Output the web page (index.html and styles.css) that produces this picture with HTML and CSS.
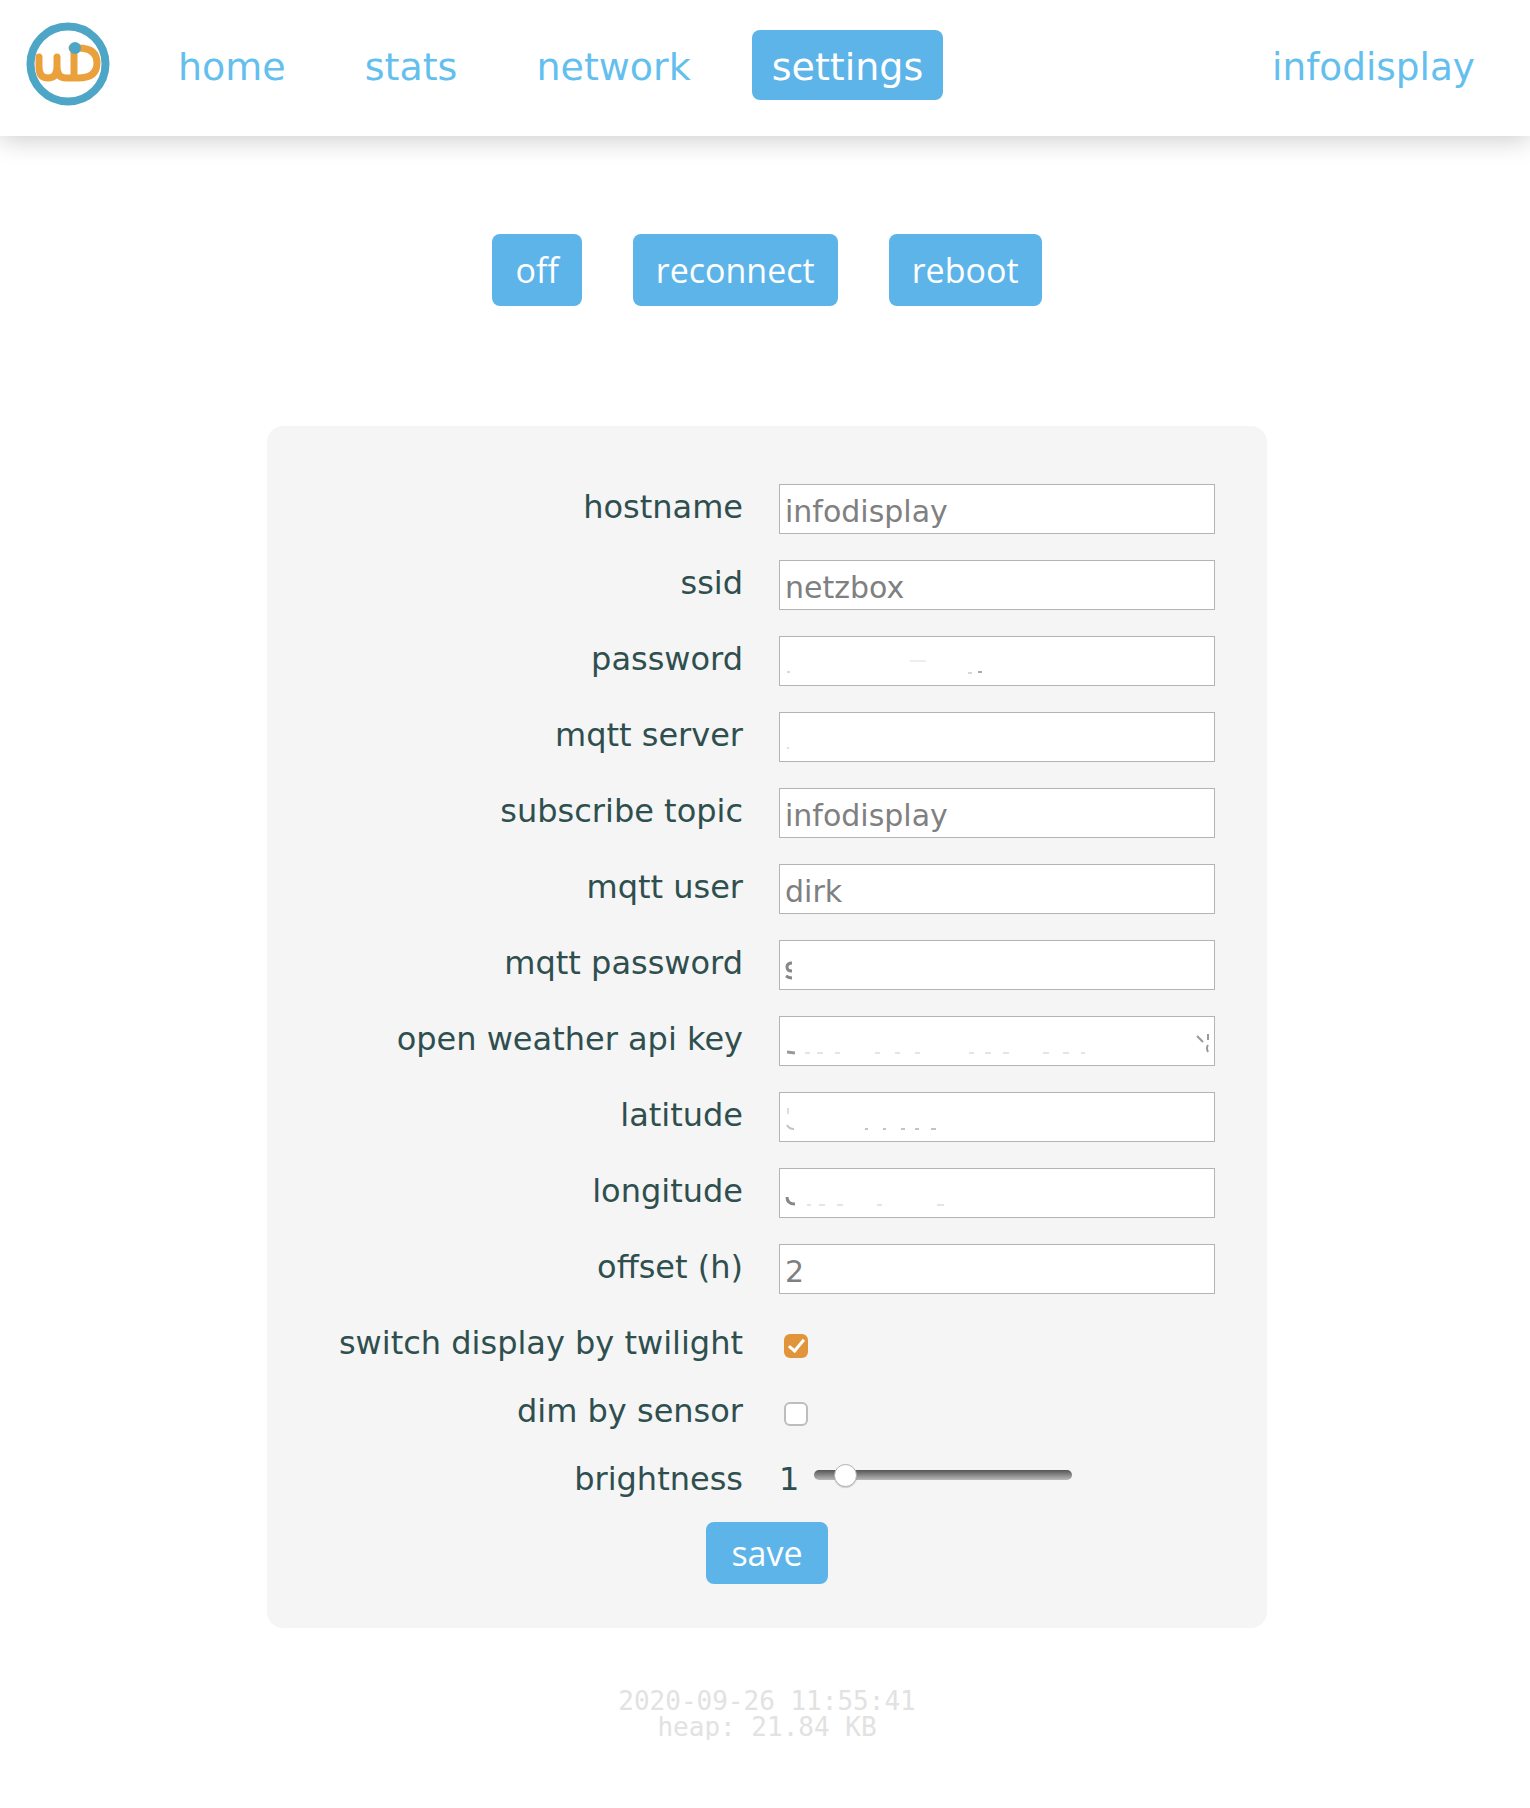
FILE: index.html
```html
<!DOCTYPE html>
<html lang="en">
<head>
    <meta charset="UTF-8">
    <title>infodisplay</title>
    <link rel="stylesheet" href="styles.css">
</head>
<body>
    <nav class="topbar">
        <svg class="logo" viewBox="26 22 84 84" aria-label="Logo">
            <circle cx="68" cy="64" r="37.5" fill="none" stroke="#4da6c6" stroke-width="8"/>
            <path d="M39 57 V67 Q39 78 48 78 Q57 78 57 67 V57 M57 67 Q57 78 66 78 H78 Q97 78 97 63 Q97 48 78 48 H72 M74 52 V78" fill="none" stroke="#eba13b" stroke-width="7" stroke-linecap="round"/>
            <circle cx="75" cy="48" r="6" fill="#4da6c6"/>
        </svg>
        <a class="nav-link" href="#">home</a>
        <a class="nav-link" href="#">stats</a>
        <a class="nav-link" href="#">network</a>
        <a class="nav-link active" href="#">settings</a>
        <a class="nav-link device" href="#">infodisplay</a>
    </nav>

    <main class="page">
        <div class="actions">
            <button class="button">off</button>
            <button class="button">reconnect</button>
            <button class="button">reboot</button>
        </div>

        <form class="panel">
            <label class="name">hostname</label>
            <input class="text-input" type="text" value="infodisplay">

            <label class="name">ssid</label>
            <input class="text-input" type="text" value="netzbox">

            <label class="name">password</label>
            <div class="field">
                <input class="text-input" type="text">
                <svg class="scraps" viewBox="0 0 436 50">
                    <path d="M131 25h16" stroke="#eeeeee" stroke-width="2"/>
                    <path d="M8 36h3M189 37h4" stroke="#d8d8d8" stroke-width="2"/>
                    <path d="M199 36h4" stroke="#aaaaaa" stroke-width="2"/>
                </svg>
            </div>

            <label class="name">mqtt server</label>
            <div class="field">
                <input class="text-input" type="text">
                <svg class="scraps" viewBox="0 0 436 50">
                    <path d="M9 35v2" stroke="#e0e0e0" stroke-width="2"/>
                </svg>
            </div>

            <label class="name">subscribe topic</label>
            <input class="text-input" type="text" value="infodisplay">

            <label class="name">mqtt user</label>
            <input class="text-input" type="text" value="dirk">

            <label class="name">mqtt password</label>
            <div class="field">
                <input class="text-input" type="text">
                <svg class="scraps" viewBox="0 0 436 50">
                    <path d="M13 23q-5 0-5 4t5 4M7 36q3 2 6 2" fill="none" stroke="#888888" stroke-width="3"/>
                </svg>
            </div>

            <label class="name">open weather api key</label>
            <div class="field">
                <input class="text-input" type="text">
                <svg class="scraps" viewBox="0 0 436 50">
                    <path d="M8 36l8 1" stroke="#999999" stroke-width="3"/>
                    <path d="M26 37h5M38 37h6M56 37h5M96 37h5M116 37h5M136 37h5M190 37h5M206 37h6M224 37h6M264 37h6M284 37h6M302 37h4" stroke="#e4e4e4" stroke-width="2"/>
                    <path d="M418 20l6 6M429 18v6M429 29q-2 3 0 7" fill="none" stroke="#999999" stroke-width="2"/>
                </svg>
            </div>

            <label class="name">latitude</label>
            <div class="field">
                <input class="text-input" type="text">
                <svg class="scraps" viewBox="0 0 436 50">
                    <path d="M9 16v6" stroke="#dddddd" stroke-width="2"/>
                    <path d="M8 33q2 4 7 4M86 37h3M104 37h3M122 37h4M136 37h4M152 37h5" fill="none" stroke="#c4c4c4" stroke-width="2"/>
                </svg>
            </div>

            <label class="name">longitude</label>
            <div class="field">
                <input class="text-input" type="text">
                <svg class="scraps" viewBox="0 0 436 50">
                    <path d="M8 29q0 7 8 7" fill="none" stroke="#888888" stroke-width="3"/>
                    <path d="M28 37h4M40 37h6M58 37h6M98 37h5M158 37h7" stroke="#e4e4e4" stroke-width="2"/>
                </svg>
            </div>

            <label class="name">offset (h)</label>
            <input class="text-input" type="text" value="2">

            <label class="name check-name">switch display by twilight</label>
            <input class="check" type="checkbox" checked>

            <label class="name check-name">dim by sensor</label>
            <input class="check" type="checkbox">

            <label class="name">brightness</label>
            <div class="level">
                <span class="level-value">1</span>
                <input class="range" type="range" min="0" max="12" value="1">
            </div>

            <div class="save-row">
                <button class="button" type="button">save</button>
            </div>
        </form>

        <div class="footer">
            2020-09-26 11:55:41<br>
            heap: 21.84 KB
        </div>
    </main>
</body>
</html>
```

FILE: styles.css
```css
body {
    margin: 0;
    background: #ffffff;
    color: #2f4f4f;
    font-family: "DejaVu Sans", Verdana, sans-serif;
}

.topbar {
    height: 136px;
    display: flex;
    align-items: center;
    background: #ffffff;
    box-shadow: 0 4px 24px rgba(0, 0, 0, 0.2);
}

.logo {
    width: 84px;
    height: 84px;
    margin: 0 48px 8px 26px;
    flex: none;
}

.nav-link {
    padding: 16px 20px 12px;
    margin: 0 39px 6px 0;
    border-radius: 8px;
    color: #64bfee;
    font-size: 38px;
    line-height: 42px;
    text-decoration: none;
}

.nav-link.active {
    margin: 0 0 6px 2px;
    background: #5db4e9;
    color: #ffffff;
}

.nav-link.device {
    margin: 0 35px 6px auto;
    font-size: 37.4px;
}

.page {
    padding-left: 4px;
}

.actions {
    display: flex;
    justify-content: center;
    gap: 51px;
    margin-top: 98px;
}

.button {
    height: 72px;
    padding: 0 23px;
    border: 0;
    border-radius: 8px;
    background: #5db4e9;
    color: #ffffff;
    font-family: "Open Sans", sans-serif;
    font-size: 34px;
}

.panel {
    width: 1000px;
    box-sizing: border-box;
    margin: 120px auto 0;
    padding: 58px 52px 44px 0;
    display: grid;
    grid-template-columns: 476px 436px;
    column-gap: 36px;
    row-gap: 26px;
    align-items: start;
    background: #f5f5f5;
    border-radius: 16px;
}

.name {
    font-size: 32px;
    line-height: 46px;
    text-align: right;
}

.check-name {
    line-height: 42px;
    margin: 2px 0 -2px;
}

.text-input {
    display: block;
    width: 100%;
    height: 50px;
    box-sizing: border-box;
    padding: 4px 5px 0;
    border: 1px solid #b4b4b4;
    border-radius: 0;
    background: #ffffff;
    color: #808080;
    font-family: "DejaVu Sans", sans-serif;
    font-size: 30px;
}

.field {
    position: relative;
}

.scraps {
    position: absolute;
    top: 0;
    left: 0;
    width: 436px;
    height: 50px;
}

.check {
    appearance: none;
    position: relative;
    width: 24px;
    height: 24px;
    margin: 14px 0 0 5px;
    border: 2px solid #bdbdbd;
    border-radius: 6px;
    background: #ffffff;
}

.check:checked {
    border-color: #e2943a;
    background: #e2943a;
}

.check:checked::after {
    content: "";
    position: absolute;
    left: 6px;
    top: 0;
    width: 6px;
    height: 13px;
    border: solid #ffffff;
    border-width: 0 3px 3px 0;
    transform: rotate(40deg);
}

.level {
    display: flex;
    align-items: flex-start;
    gap: 16px;
    font-size: 32px;
    line-height: 46px;
}

.level-value {
    width: 19px;
}

.range {
    appearance: none;
    width: 258px;
    height: 24px;
    margin: 7px 0 0;
    background: transparent;
}

.range::-webkit-slider-runnable-track {
    height: 10px;
    border-radius: 5px;
    background: linear-gradient(#555555, #b8b8b8);
}

.range::-webkit-slider-thumb {
    appearance: none;
    width: 23px;
    height: 23px;
    margin-top: -6px;
    border: 1px solid #b0b0b0;
    border-radius: 50%;
    background: #ffffff;
    box-sizing: border-box;
    box-shadow: 0 1px 1px rgba(0, 0, 0, 0.15);
}

.save-row {
    grid-column: 1 / -1;
    display: flex;
    justify-content: center;
    padding-left: 52px;
    margin-top: -6px;
}

.save-row .button {
    height: 62px;
    padding: 0 25px;
}

.footer {
    margin-top: 60px;
    text-align: center;
    color: #e2e2e2;
    font-family: "DejaVu Sans Mono", monospace;
    font-size: 26px;
    line-height: 26px;
}
```
